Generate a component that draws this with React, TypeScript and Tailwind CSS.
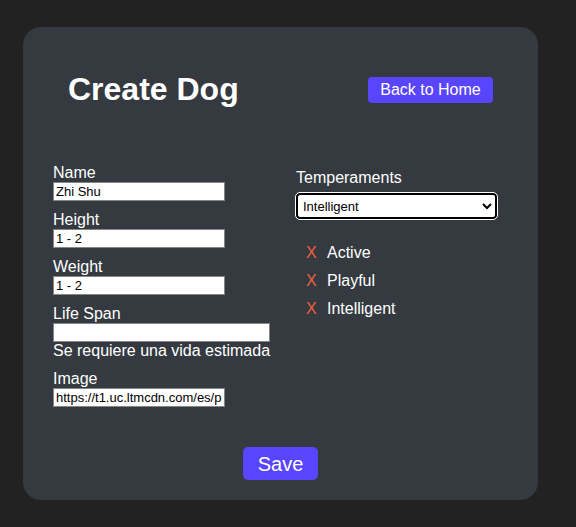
import { useState } from 'react'

const temperaments = ['Active', 'Playful', 'Intelligent']

export default function App() {
  const [form, setForm] = useState({
    name: 'Zhi Shu',
    height: '1 - 2',
    weight: '1 - 2',
    lifeSpan: '',
    image: 'https://t1.uc.ltmcdn.com/es/posts/dog.jpg',
  })
  const [selected, setSelected] = useState<string[]>(temperaments)

  const inputCls =
    'block h-[19px] border border-[#858585] bg-white px-[2px] text-[13px] leading-[17px] text-black outline-none'

  return (
    <div className="min-h-[527px] bg-[#222222] pt-[27px] font-['Liberation_Sans',Arial,sans-serif]">
      <div className="ml-[23px] h-[473px] w-[515px] rounded-[18px] bg-[#343a40] pt-[44px] text-white">
        {/* HEADER */}
        <div className="flex items-center justify-between pl-[45px] pr-[45px]">
          <h1 className="text-[32px] font-bold leading-[37px]">Create Dog</h1>
          <button className="h-[26px] w-[125px] rounded-[4px] bg-[#5a45fe] text-[16px] text-white">
            Back to Home
          </button>
        </div>

        {/* FORM */}
        <div className="mt-[56px] flex pl-[30px]">
          <div className="flex w-[217px] flex-col gap-[10px] text-[16px] leading-[18px]">
            <div>
              <label className="block">Name</label>
              <input
                className={`${inputCls} w-[172px]`}
                value={form.name}
                onChange={(e) => setForm({ ...form, name: e.target.value })}
              />
            </div>
            <div>
              <label className="block">Height</label>
              <input
                className={`${inputCls} w-[172px]`}
                value={form.height}
                onChange={(e) => setForm({ ...form, height: e.target.value })}
              />
            </div>
            <div>
              <label className="block">Weight</label>
              <input
                className={`${inputCls} w-[172px]`}
                value={form.weight}
                onChange={(e) => setForm({ ...form, weight: e.target.value })}
              />
            </div>
            <div>
              <label className="block">Life Span</label>
              <input
                className={`${inputCls} w-[217px]`}
                value={form.lifeSpan}
                onChange={(e) => setForm({ ...form, lifeSpan: e.target.value })}
              />
              <p className="whitespace-nowrap">Se requiere una vida estimada</p>
            </div>
            <div>
              <label className="block">Image</label>
              <input
                className={`${inputCls} w-[172px]`}
                value={form.image}
                onChange={(e) => setForm({ ...form, image: e.target.value })}
              />
            </div>
          </div>

          <div className="ml-[26px] mt-[5px] text-[16px] leading-[18px]">
            <label className="block">Temperaments</label>
            <select
              className="mt-[6px] h-[26px] w-[201px] rounded-[4px] border-2 border-black bg-white pl-[1px] text-[13px] text-black outline outline-1 outline-white"
              value="Intelligent"
              onChange={() => {}}
            >
              {temperaments.map((t) => (
                <option key={t} value={t}>
                  {t}
                </option>
              ))}
            </select>
            <ul className="mt-[25px] flex flex-col gap-[10px] pl-[10px]">
              {selected.map((t) => (
                <li key={t} className="flex items-center">
                  <button
                    className="w-[21px] text-left text-[#f2603f]"
                    onClick={() => setSelected(selected.filter((s) => s !== t))}
                  >
                    X
                  </button>
                  <span>{t}</span>
                </li>
              ))}
            </ul>
          </div>
        </div>

        {/* SAVE */}
        <div className="mt-[40px] flex justify-center">
          <button className="h-[33px] w-[75px] rounded-[5px] bg-[#5a45fe] text-[20px] text-white">
            Save
          </button>
        </div>
      </div>
    </div>
  )
}
